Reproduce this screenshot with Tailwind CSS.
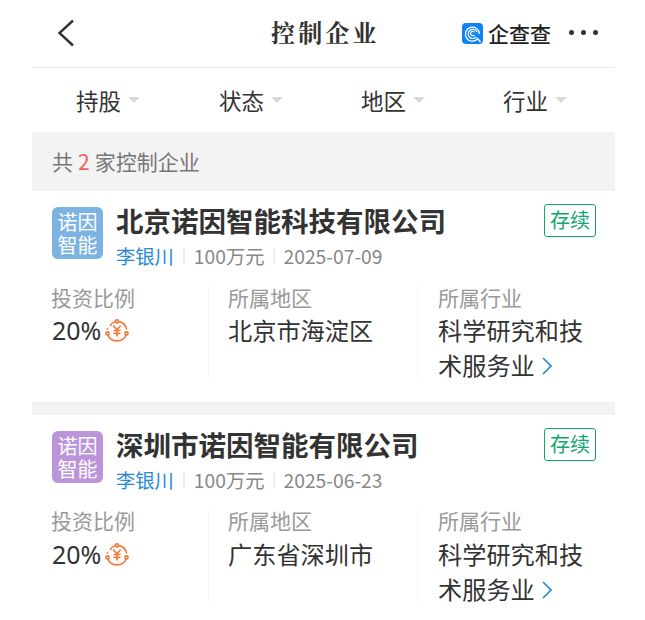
<!DOCTYPE html>
<html lang="zh-CN">
<head>
  <meta charset="UTF-8">
  <meta name="viewport" content="width=device-width, initial-scale=1.0">
  <title>控制企业</title>
  <script src="https://cdn.jsdelivr.net/npm/@tailwindcss/browser@4"></script>
</head>
<body class="bg-white overflow-hidden font-['Noto_Sans_CJK_SC','Liberation_Sans',sans-serif]">

  <div class="w-[645px] h-[620px] overflow-hidden px-[32px] box-border">
    <div class="w-[583px]">

      <!-- nav -->
      <div class="h-[68px] border-b border-[#ececec] flex items-center relative">
        <svg class="ml-[25px] mb-[1px]" width="18" height="28" viewBox="0 0 18 28" fill="none" stroke="#333" stroke-width="2.4">
          <path d="M16 1.5 L2.5 14 L16 26.5"/>
        </svg>
        <div class="absolute left-[239px] top-[14px] text-[24px] leading-[36px] font-bold tracking-[3.2px] text-[#333] font-['Noto_Serif_CJK_SC','Noto_Sans_CJK_SC',sans-serif]">控制企业</div>
        <div class="absolute left-[430px] top-[21px] flex items-center">
          <svg width="21" height="21" viewBox="0 0 21 21" fill="none">
            <rect width="21" height="21" rx="4" fill="#1283f5"/>
            <path d="M15.5 16 A7 7 0 1 1 17.4 11" stroke="#fff" stroke-width="1.3"/>
            <path d="M14.2 14 A4.6 4.6 0 1 1 15 9" stroke="#fff" stroke-width="1.2"/>
            <path d="M12.4 9 A2.2 2.2 0 1 0 12.4 12" stroke="#fff" stroke-width="1.2"/>
            <path d="M15 15 L18.5 19" stroke="#fff" stroke-width="1.3"/>
          </svg>
          <span class="ml-[5px] text-[21px] leading-[24px] text-[#222] font-medium">企查查</span>
        </div>
        <div class="absolute left-[537px] top-[30px] flex gap-[7px]">
          <span class="w-[5px] h-[5px] rounded-full bg-[#333]"></span>
          <span class="w-[5px] h-[5px] rounded-full bg-[#333]"></span>
          <span class="w-[5px] h-[5px] rounded-full bg-[#333]"></span>
        </div>
      </div>

      <!-- filters -->
      <div class="h-[64px] flex pl-[44px]">
        <div class="w-[143px] flex items-center">
          <span class="text-[22.5px] leading-[32px] text-[#333]">持股</span>
          <span class="ml-[7px] w-0 h-0 border-x-[6px] border-x-transparent border-t-[6px] border-t-[#d8d8d8]"></span>
        </div>
        <div class="w-[142px] flex items-center">
          <span class="text-[22.5px] leading-[32px] text-[#333]">状态</span>
          <span class="ml-[7px] w-0 h-0 border-x-[6px] border-x-transparent border-t-[6px] border-t-[#d8d8d8]"></span>
        </div>
        <div class="w-[142px] flex items-center">
          <span class="text-[22.5px] leading-[32px] text-[#333]">地区</span>
          <span class="ml-[7px] w-0 h-0 border-x-[6px] border-x-transparent border-t-[6px] border-t-[#d8d8d8]"></span>
        </div>
        <div class="flex items-center">
          <span class="text-[22.5px] leading-[32px] text-[#333]">行业</span>
          <span class="ml-[7px] w-0 h-0 border-x-[6px] border-x-transparent border-t-[6px] border-t-[#d8d8d8]"></span>
        </div>
      </div>

      <!-- count -->
      <div class="h-[59px] bg-[#f3f3f3] flex items-center pl-[20px] text-[21px] text-[#777]">
        共<span class="text-[#e8615c] mx-[5px]">2</span>家控制企业
      </div>

      <!-- card 1 -->
      <div class="h-[211px] pt-[16px] pl-[20px] pr-[19px]">
        <div class="flex items-start h-[80px]">
          <div class="w-[51px] h-[52px] rounded-[6px] bg-[#7db3e0] text-white text-[20px] leading-[23px] text-center pt-[3px] shrink-0">诺因<br>智能</div>
          <div class="ml-[13px] grow">
            <div class="-mt-[3px] text-[27.5px] leading-[32px] font-bold text-[#333]">北京诺因智能科技有限公司</div>
            <div class="mt-[7px] flex items-center text-[19.3px] leading-[26px] text-[#888]">
              <span class="text-[#1f8ad8]">李银川</span>
              <span class="w-[2px] h-[16px] bg-[#eee] mx-[9px]"></span>
              <span>100万元</span>
              <span class="w-[2px] h-[16px] bg-[#eee] mx-[8.5px]"></span>
              <span>2025-07-09</span>
            </div>
          </div>
          <div class="w-[52px] h-[33px] -mt-[3px] border-[1.5px] border-[#12a66f] rounded-[3px] text-[#12a66f] text-[20px] leading-[29px] text-center shrink-0">存续</div>
        </div>
        <div class="flex">
          <div class="w-[157px] h-[91px] border-r-[1.5px] border-[#f2f2f2]">
            <div class="-mt-[3px] -ml-[1px] text-[21px] leading-[27px] text-[#999]">投资比例</div>
            <div class="mt-[2px] flex items-center text-[25px] leading-[34px] text-[#333] font-['Noto_Sans',sans-serif]">
              20%
              <svg class="ml-[4px] mt-[2px]" width="24" height="24" viewBox="0 0 24 24" fill="none" stroke="#ef7b3c" stroke-width="1.6">
                <path d="M5 7 A10 10 0 0 1 10 2.6 M14 2.6 A10 10 0 0 1 21.8 10.5 M21.5 15 A10 10 0 0 1 2.5 15 M2.2 10.5 A10 10 0 0 1 3 9"/>
                <circle cx="12" cy="2.5" r="1.6"/>
                <circle cx="2.5" cy="14.5" r="1.6"/>
                <circle cx="21.5" cy="14.5" r="1.6"/>
                <path d="M8.3 6.5 L12 11 L15.7 6.5 M12 11 V17.5 M8.5 11.5 H15.5 M8.5 14.3 H15.5" stroke-width="1.7"/>
              </svg>
            </div>
          </div>
          <div class="w-[209px] h-[91px] pl-[19px] border-r-[1.5px] border-[#f2f2f2]">
            <div class="-mt-[3px] text-[21px] leading-[27px] text-[#999]">所属地区</div>
            <div class="mt-[2px] text-[24.2px] leading-[34px] text-[#333]">北京市海淀区</div>
          </div>
          <div class="pl-[20px] w-[170px]">
            <div class="-mt-[3px] text-[21px] leading-[27px] text-[#999]">所属行业</div>
            <div class="mt-[2px] text-[24.2px] leading-[34.5px] text-[#333]">科学研究和技<br>术服务业<svg class="inline-block ml-[7px] mb-[3px]" width="10" height="18" viewBox="0 0 10 18" fill="none" stroke="#1f8ad8" stroke-width="1.6"><path d="M1 1 L9 9 L1 17"/></svg></div>
          </div>
        </div>
      </div>

      <div class="h-[13px] bg-[#f3f3f3]"></div>

      <!-- card 2 -->
      <div class="h-[211px] pt-[16px] pl-[20px] pr-[19px]">
        <div class="flex items-start h-[80px]">
          <div class="w-[51px] h-[52px] rounded-[6px] bg-[#bb94da] text-white text-[20px] leading-[23px] text-center pt-[3px] shrink-0">诺因<br>智能</div>
          <div class="ml-[13px] grow">
            <div class="-mt-[3px] text-[27.5px] leading-[32px] font-bold text-[#333]">深圳市诺因智能有限公司</div>
            <div class="mt-[7px] flex items-center text-[19.3px] leading-[26px] text-[#888]">
              <span class="text-[#1f8ad8]">李银川</span>
              <span class="w-[2px] h-[16px] bg-[#eee] mx-[9px]"></span>
              <span>100万元</span>
              <span class="w-[2px] h-[16px] bg-[#eee] mx-[8.5px]"></span>
              <span>2025-06-23</span>
            </div>
          </div>
          <div class="w-[52px] h-[33px] -mt-[3px] border-[1.5px] border-[#12a66f] rounded-[3px] text-[#12a66f] text-[20px] leading-[29px] text-center shrink-0">存续</div>
        </div>
        <div class="flex">
          <div class="w-[157px] h-[91px] border-r-[1.5px] border-[#f2f2f2]">
            <div class="-mt-[4px] -ml-[1px] text-[21px] leading-[27px] text-[#999]">投资比例</div>
            <div class="mt-[3px] flex items-center text-[25px] leading-[34px] text-[#333] font-['Noto_Sans',sans-serif]">
              20%
              <svg class="ml-[4px] mt-[2px]" width="24" height="24" viewBox="0 0 24 24" fill="none" stroke="#ef7b3c" stroke-width="1.6">
                <path d="M5 7 A10 10 0 0 1 10 2.6 M14 2.6 A10 10 0 0 1 21.8 10.5 M21.5 15 A10 10 0 0 1 2.5 15 M2.2 10.5 A10 10 0 0 1 3 9"/>
                <circle cx="12" cy="2.5" r="1.6"/>
                <circle cx="2.5" cy="14.5" r="1.6"/>
                <circle cx="21.5" cy="14.5" r="1.6"/>
                <path d="M8.3 6.5 L12 11 L15.7 6.5 M12 11 V17.5 M8.5 11.5 H15.5 M8.5 14.3 H15.5" stroke-width="1.7"/>
              </svg>
            </div>
          </div>
          <div class="w-[209px] h-[91px] pl-[19px] border-r-[1.5px] border-[#f2f2f2]">
            <div class="-mt-[4px] text-[21px] leading-[27px] text-[#999]">所属地区</div>
            <div class="mt-[3px] text-[24.2px] leading-[34px] text-[#333]">广东省深圳市</div>
          </div>
          <div class="pl-[20px] w-[170px]">
            <div class="-mt-[4px] text-[21px] leading-[27px] text-[#999]">所属行业</div>
            <div class="mt-[3px] text-[24.2px] leading-[34.5px] text-[#333]">科学研究和技<br>术服务业<svg class="inline-block ml-[7px] mb-[3px]" width="10" height="18" viewBox="0 0 10 18" fill="none" stroke="#1f8ad8" stroke-width="1.6"><path d="M1 1 L9 9 L1 17"/></svg></div>
          </div>
        </div>
      </div>

    </div>
  </div>

</body>
</html>
